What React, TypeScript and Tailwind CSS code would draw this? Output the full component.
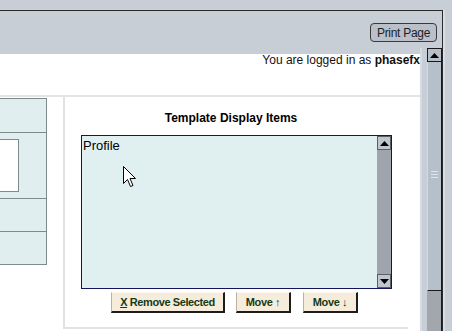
import React from 'react';

const ArrowUp = () => (
    <svg width="9" height="5" viewBox="0 0 9 5" className="block">
        <path d="M0 5 L4.5 0 L9 5 Z" fill="#000" />
    </svg>
);

const ArrowDown = () => (
    <svg width="9" height="5" viewBox="0 0 9 5" className="block">
        <path d="M0 0 L9 0 L4.5 5 Z" fill="#000" />
    </svg>
);

const Cursor = () => (
    <svg width="14" height="22" viewBox="0 0 14 22" className="absolute left-[123px] top-[166px]">
        <path d="M0.5 0.5 L0.5 17.5 L4.5 13.5 L7.5 20.5 L10 19.5 L7 12.5 L12.5 12.5 Z" fill="#fff" stroke="#000" strokeWidth="1" />
    </svg>
);

const ListButton: React.FC<{ label: React.ReactNode; width: string; className?: string }> = ({ label, width, className }) => (
    <button
        className={`${width} ${className ?? ''} h-[21px] bg-[#f5ecdc] border-t border-l border-t-[#fbf6ee] border-l-[#b8b2a6] border-r-2 border-b-2 border-r-[#1c1c1c] border-b-[#1c1c1c] text-[11px] tracking-[-0.4px] font-bold text-[#153a15] leading-none flex items-center justify-center`}
    >
        {label}
    </button>
);

export default function App() {
    return (
        <div className="relative w-[452px] h-[331px] overflow-hidden bg-[#c8ced6] font-['Liberation_Sans',Arial,sans-serif]">
            <div className="h-[10px]" />
            <div className="flex h-[321px]">
                <div className="w-[443px] border-t border-r border-[#2a2a2a] flex flex-col">
                    {/* header strip */}
                    <div className="h-[37px] flex justify-end items-start pt-[12px] pr-[5px]">
                        <button className="h-[19px] w-[67px] rounded-[4px] border border-[#3a3a3a] bg-[#b9c0ca] text-[12px] tracking-[-0.3px] leading-none text-[#1e1e1e]">
                            Print Page
                        </button>
                    </div>

                    <div className="flex flex-1 min-h-0">
                        {/* page body */}
                        <div className="w-[420px] pt-[6px]">
                            <div className="bg-white h-full flex flex-col">
                                <div className="h-[43px] border-b-2 border-[#e2e4e6] text-right text-[12px] leading-[12px] text-[#111]">
                                    You are logged in as <b>phasefx</b>
                                </div>

                                <div className="flex items-start">
                                    {/* left editor box */}
                                    <div className="mt-[1px] w-[47px] bg-[#e0eef0] border-t border-r border-b border-[#7d8b8b]">
                                        <div className="h-[34px] border-b border-[#7d8b8b]" />
                                        <div className="h-[66px] border-b border-[#7d8b8b] pt-[6px]">
                                            <div className="w-[19px] h-[53px] bg-white border-t border-r border-b border-[#7d8b8b]" />
                                        </div>
                                        <div className="h-[33px] border-b border-[#7d8b8b]" />
                                        <div className="h-[32px]" />
                                    </div>

                                    {/* template display items panel */}
                                    <div className="ml-[16px] w-[345px] h-[232px] border-l-2 border-b-2 border-[#e2e2e2] flex flex-col">
                                        <div className="pt-[14px] pr-[11px] text-center text-[12px] leading-[14px] font-bold text-black">
                                            Template Display Items
                                        </div>
                                        <div className="mt-[10px] ml-[16px] w-[311px] h-[154px] border border-[#14145a] bg-[#e0eff0] flex">
                                            <div className="flex-1 pl-[1px] pt-[2px] text-[13px] leading-[15px] text-black">Profile</div>
                                            <div className="w-[14px] bg-[#a0a4ac] flex flex-col justify-between">
                                                <div className="h-[14px] bg-[#c0c6ce] border border-[#5a5e66] flex items-center justify-center">
                                                    <ArrowUp />
                                                </div>
                                                <div className="h-[14px] bg-[#c0c6ce] border border-[#5a5e66] flex items-center justify-center">
                                                    <ArrowDown />
                                                </div>
                                            </div>
                                        </div>
                                        <div className="mt-[3px] flex">
                                            <ListButton
                                                width="w-[114px]"
                                                className="ml-[46px]"
                                                label={
                                                    <>
                                                        <span className="underline">X</span>&nbsp;Remove Selected
                                                    </>
                                                }
                                            />
                                            <ListButton width="w-[55px]" className="ml-[11px]" label="Move ↑" />
                                            <ListButton width="w-[55px]" className="ml-[12px]" label="Move ↓" />
                                        </div>
                                    </div>
                                </div>
                            </div>
                        </div>

                        {/* gap + page scrollbar */}
                        <div className="w-[7px] border-l-2 border-[#d6dbe1]" />
                        <div className="w-[15px] flex flex-col">
                            <div className="h-[14px] bg-[#b8bfc9] border border-[#1a1a1a] flex items-center justify-center">
                                <ArrowUp />
                            </div>
                            <div className="h-[229px] bg-[#b6c0cb] border-l border-l-[#d4dae0] border-r border-r-[#1a1a1a] border-b border-b-[#1a1a1a] flex flex-col items-center justify-center gap-[2px] pb-[4px]">
                                <div className="w-[7px] h-px bg-[#dfe4ea]" />
                                <div className="w-[7px] h-px bg-[#dfe4ea]" />
                                <div className="w-[7px] h-px bg-[#dfe4ea]" />
                            </div>
                            <div className="flex-1 bg-[#a2a6ad] border-r border-[#1a1a1a]" />
                        </div>
                    </div>
                </div>
                <div className="flex-1 border-l-2 border-[#d8dde3]" />
            </div>
            <Cursor />
        </div>
    );
}
